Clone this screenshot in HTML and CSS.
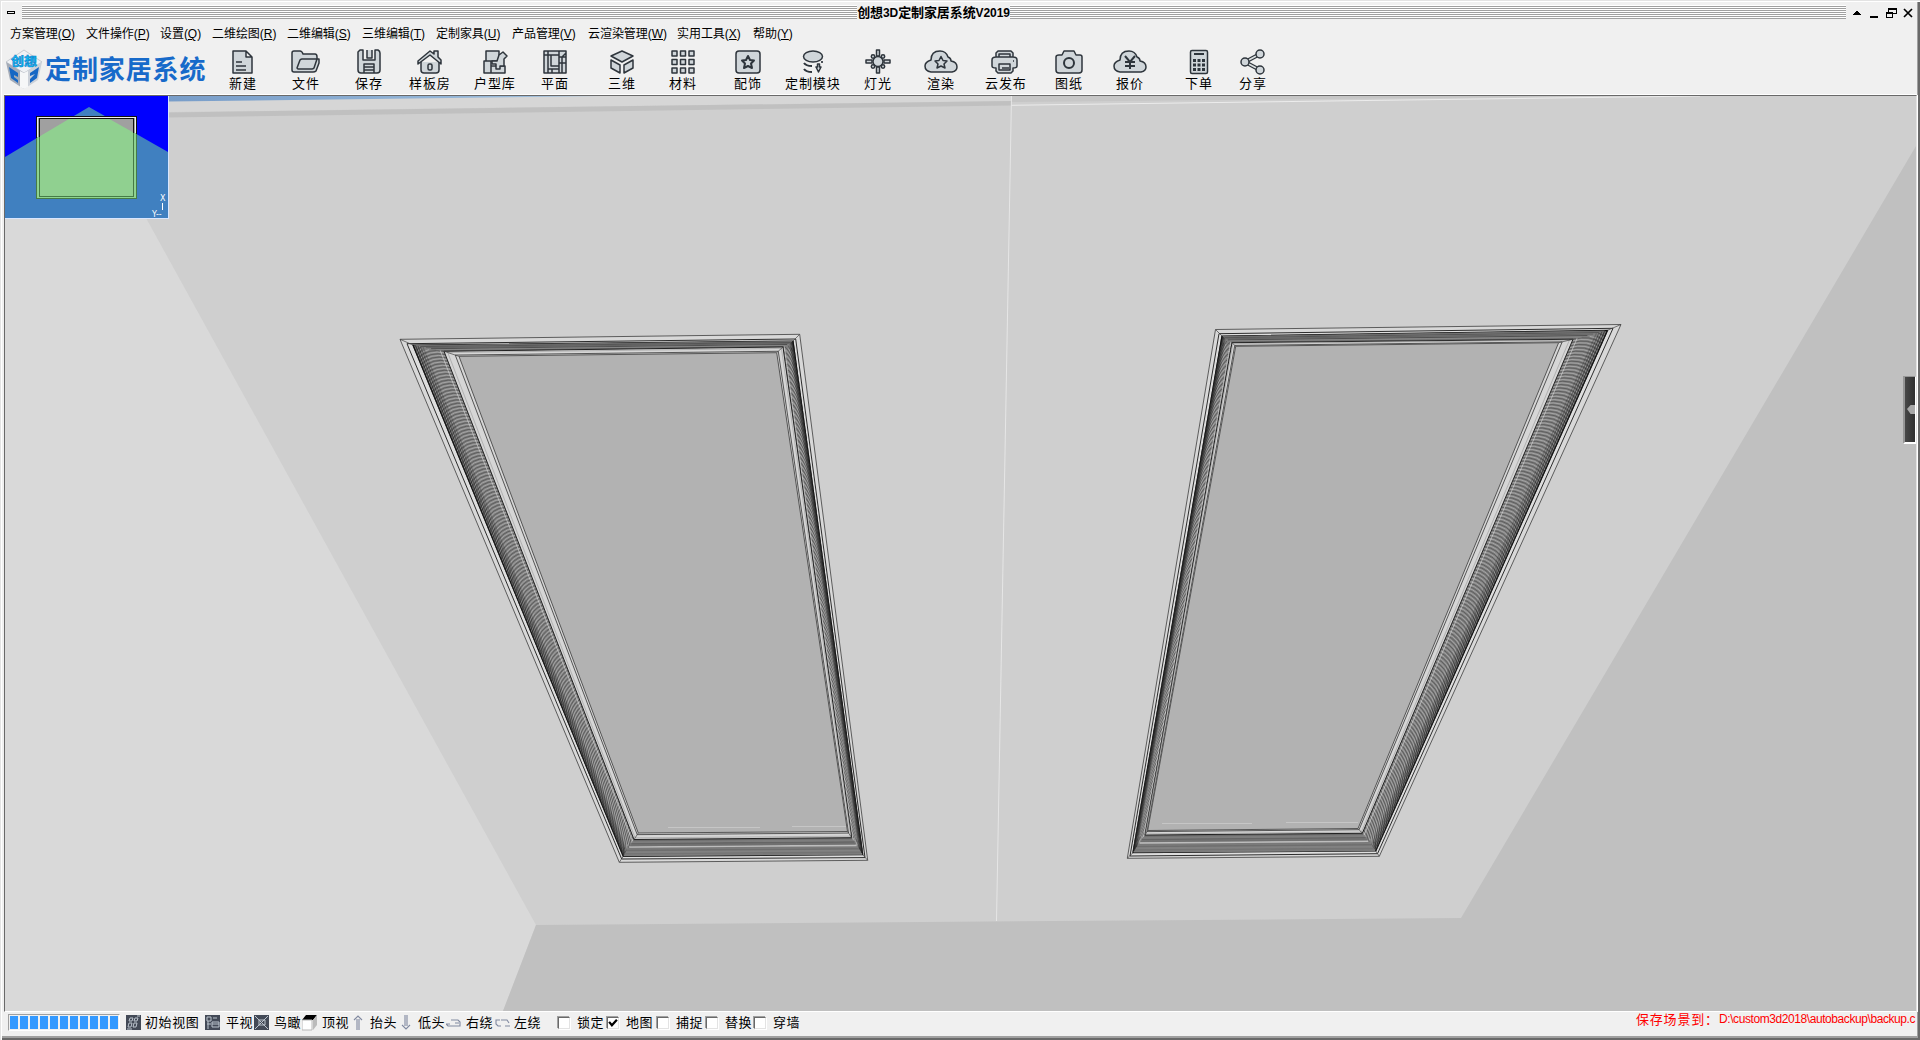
FILE: index.html
```html
<!DOCTYPE html>
<html lang="zh-CN">
<head>
<meta charset="utf-8">
<title>创想3D定制家居系统V2019</title>
<link rel="stylesheet" href="styles.css">
</head>
<body>
<div class="window">
  <header class="titlebar">
    <span class="sysmenu"></span>
    <span class="stripes left"></span>
    <h1>创想<span>3D</span>定制家居系统<span>V2019</span></h1>
    <span class="stripes right"></span>
    <svg class="winbtns" width="72" height="20" viewBox="0 0 72 20" shape-rendering="crispEdges">
      <path d="M7 15h8v-1h-1v-1h-1v-1h-1v-1h-2v1h-1v1H8v1H7z"/>
      <path d="M24 16h8v2h-8z"/>
      <path d="M42 8h8v5h-3M42 8v4M42 9h8" fill="none" stroke="#000" />
      <path d="M40 12h6v5h-6zM40 13h6" fill="none" stroke="#000"/>
      <path d="M58 9l8 8M66 9l-8 8" stroke="#000" stroke-width="1.7" shape-rendering="auto"/>
    </svg>
  </header>
  <nav class="menu">
    <span>方案管理(<u>O</u>)</span><span>文件操作(<u>P</u>)</span><span>设置(<u>Q</u>)</span><span>二维绘图(<u>R</u>)</span><span>二维编辑(<u>S</u>)</span><span>三维编辑(<u>T</u>)</span><span>定制家具(<u>U</u>)</span><span>产品管理(<u>V</u>)</span><span>云渲染管理(<u>W</u>)</span><span>实用工具(<u>X</u>)</span><span>帮助(<u>Y</u>)</span>
  </nav>
  <div class="tools">
    <div class="brand">
      <svg width="38" height="42" viewBox="0 0 38 42">
        <path d="M19 1L37 13 19 24 1 13z" fill="#f0f2f5" stroke="#b5bac2" stroke-width=".7"/>
        <path d="M1 13l18 11v16L5 31z" fill="#a4abb7"/><path d="M37 13L19 24v16l14-9z" fill="#ccd1d9"/>
        <path d="M15 22l4 2 4-2v16l-4 2-4-2z" fill="#f6f7f8"/>
        <path d="M4 18l9 6v4l-4-2v2l4 3v3l-7-5z" fill="#1767c4"/><path d="M34 18l-9 6v3l5-2-5 5v4l7-5z" fill="#1767c4"/>
        <text x="19" y="17" text-anchor="middle" textLength="26" lengthAdjust="spacingAndGlyphs" class="cube-text">创想</text>
      </svg>
      <b>定制家居系统</b>
    </div>
    <div class="toolbar">
      <button><svg viewBox="0 0 34 26"><path class="f" d="M7 2h13l6 6v16H7zM20 2v6h6M10 13h6M10 17h10M10 21h10"/></svg>新建</button>
      <button><svg viewBox="0 0 34 26"><path class="f" d="M5 23Q3 23 3 21V4Q3 2 5 2h6q2 0 3 3h12q2 0 2 3v2h2v4l-3 8q-1 1-3 1zM8 19l3-8q1-1 2-1h15l-3 9q-1 1-2 1H9z"/></svg>文件</button>
      <button><svg viewBox="0 0 34 26"><path class="f" d="M8 1h3v10h12V1h3q2 1 2 3v17q0 3-3 3H9q-3 0-3-3V3zM15 1v8h5V1M12 24v-9h10v9M12 18h10M12 21h10"/></svg>保存</button>
      <button><svg viewBox="0 0 34 26"><path class="f" d="M8 13v8q0 3 3 3h12q3 0 3-3v-8"/><path class="f" d="M5 15v-3L17 2l4 3V2h4v6l3 3v4L17 6z"/><rect class="f" x="15" y="15" width="4" height="6" rx="1.500"/></svg>样板房</button>
      <button><svg viewBox="0 0 34 26"><path class="f" d="M6 12h7v12H6zM13 17h14v7H13zM8 2h13v10H8z"/><path class="f" d="M21 6l4-3 4 4-3 3v7h-4v3h-4v-5h-4v-3h5z"/></svg>户型库</button>
      <button><svg viewBox="0 0 34 26"><path class="f" d="M6 2h22v22H6zM10 2v22M6 6h15M13 6h8v11h-8zM21 2v22M24 24V8l4-4M10 20h11M14 20v4M21 8h7M21 14h7"/></svg>平面</button>
      <button><svg viewBox="0 0 34 26"><path class="f" d="M17 2l11 5-11 6L6 7zM6 11l9 5v8l-9-5zM28 11l-9 5v8l9-5z"/></svg>三维</button>
      <button><svg viewBox="0 0 34 26"><path class="f" d="M6 2h5v5H6zM14.500 2h5v5h-5zM23 2h5v5h-5zM6 10.500h5v5H6zM14.500 10.500h5v5h-5zM23 10.500h5v5h-5zM6 19h5v5H6zM14.500 19h5v5h-5zM23 19h5v5h-5z"/></svg>材料</button>
      <button><svg viewBox="0 0 34 26"><rect class="f" x="5" y="2" width="24" height="22" rx="3"/><path class="f k" d="M17 7l2 4 4 .500-3 3 1 4.500-4-2-4 2 1-4.500-3-3 4-.500z"/></svg>配饰</button>
      <button><svg viewBox="0 0 34 26"><ellipse class="f" cx="17" cy="7.500" rx="9.500" ry="5.500"/><path class="n k" d="M8 14q2 3 8 3M8 20q2 3 8 3"/><path class="f" d="M20 18h1.500v-3h2v3H25l-2.500 5z"/><path class="n" d="M26 12v2"/></svg>定制模块</button>
      <button><svg viewBox="0 0 34 26"><path class="f" d="M15.500 1h3v6h-3zM15.500 18h3v6h-3zM5 11h6v3H5zM23 11h6v3h-6z"/><circle class="f" cx="17" cy="12.500" r="5"/><g class="f"><circle cx="12" cy="7.500" r="1.700"/><circle cx="22" cy="7.500" r="1.700"/><circle cx="12" cy="17.500" r="1.700"/><circle cx="22" cy="17.500" r="1.700"/></g></svg>灯光</button>
      <button><svg viewBox="0 0 34 26"><path class="f" d="M7 23Q1 22 1 17q0-4 6-6 0-9 9-9 6 0 8 6 3 1 3 4 6 1 6 6 0 4-5 5z"/><path class="f" d="M17 7.500l2 4 4 .500-3 3 1 4-4-2-4 2 1-4-3-3 4-.500z"/></svg>渲染</button>
      <button><svg viewBox="0 0 34 26"><path class="f" d="M7 8V4l2-2h13l2 2v4q4 0 4 3v6q0 2-4 2v3l-2 2H9l-2-2v-3q-4 0-4-2v-6q0-3 4-3zM7 8h17M10 5h11v3H10zM10 15h11v6H10zM13 19h7M24 12h1"/></svg>云发布</button>
      <button><svg viewBox="0 0 34 26"><path class="f" d="M4 8q0-2 3-2h3l2-4h10l2 4h4q2 0 2 2v13q0 3-3 3H7q-3 0-3-3z"/><circle class="f k" cx="17" cy="14" r="5"/></svg>图纸</button>
      <button><svg viewBox="0 0 34 26"><path class="f" d="M7 23Q1 22 1 17q0-4 6-6 0-9 9-9 6 0 8 6 3 1 3 4 6 1 6 6 0 4-5 5z"/><path class="n k" d="M12 7l5 6 5-6M12 13h10M12 17h10M17 13v7"/></svg>报价</button>
      <button><svg viewBox="0 0 34 26"><rect class="f" x="8.500" y="1.500" width="17" height="23" rx="1.500"/><path class="n k" d="M12 5h10"/><path class="n keys" d="M11 11.500h12M11 16h12M11 20.500h12"/></svg>下单</button>
      <button><svg viewBox="0 0 34 26"><path class="n thick" d="M9 13L24 5M9 13l15 8"/><path class="thin" d="M9 13L24 5M9 13l15 8"/><circle class="f" cx="9" cy="13" r="4"/><circle class="f" cx="24" cy="5" r="4"/><circle class="f" cx="24" cy="21" r="4"/></svg>分享</button>
    </div>
  </div>
  <main class="viewport">
    <svg class="scene" width="1911" height="915" viewBox="5 96 1911 915">
      <defs>
        <linearGradient id="sky"><stop offset="0" stop-color="#789dc9"/><stop offset="1" stop-color="#a3c3df"/></linearGradient>
      </defs>
      <rect x="5" y="96" width="1911" height="915" fill="#cfcfcf"/>
      <path d="M168 96H1011V101L168 112z" fill="#d6d6d6"/>
      <path d="M168 96H600L168 101.500z" fill="url(#sky)"/>
      <path d="M168 112.500L1011 101V105.500L168 117.500z" fill="#c0c0c0"/>
      <path d="M1011 96H1640L1011 102z" fill="#c6c6c6"/>
      <path d="M1011 105.300L1700 96" stroke="#ececec" fill="none"/>
      <path d="M5 218H146L536 925 503 1011H5z" fill="#d9d9d9"/>
      <path d="M536 925L1461 918 1916 146V1011H503z" fill="#c0c0c0"/>
      <path d="M1011.500 96L996.500 921" stroke="#e6e6e6" fill="none"/>
      <g id="frames"></g>
      <path d="M668 827.500h92M792 826.500h54M1162 823.500h90M1286 822.500h72" stroke="#c6c6c6" fill="none" shape-rendering="crispEdges"/>
    </svg>
    <svg class="minimap" width="164" height="123" viewBox="0 0 164 123">
      <rect width="163" height="122" fill="#00f"/>
      <path d="M0 61L84 11 163 56V122H0z" fill="#4080c0"/>
      <rect x="31" y="20" width="101" height="83" fill="#a0a0a0"/>
      <path d="M31 42.500L69 20h30l33 18.400V103H31z" fill="#90d090"/>
      <g fill="none" shape-rendering="crispEdges">
        <path d="M32.500 41V22M130.500 37V22M32 21.500h99" stroke="#eee"/>
        <path d="M33 41V102M130.500 37V102M32 101.500h99" stroke="#8ed68e"/>
        <path d="M31.500 42V20.500h100V38M34.500 41V22.500h94V37" stroke="#111"/>
        <path d="M31.500 42V102.500h100V38M34.500 41V100.500h94V37" stroke="#467b46"/>
        <path d="M163.500 0V122.500H0" stroke="#d8e6ff"/>
      </g>
      <text x="155" y="105" class="axis">X</text><path d="M157.500 107v7" stroke="#fff"/><text x="147" y="121" class="axis">Y--</text>
    </svg>
    <div class="drawer"><i></i></div>
  </main>
  <footer class="status">
    <div class="progress"><i></i><i></i><i></i><i></i><i></i><i></i><i></i><i></i><i></i><i></i><i></i></div>
    <div class="views">
      <svg viewBox="0 0 16 16"><path class="bg" d="M0 0h15v15H0z"/><path class="w" d="M4 3h3L6 6H3zM9 3h3l-1 3H8zM3 8h3l-1 4H2zM8 8h3l-1 4H7zM11 1h3M1 14h5"/></svg><span>初始视图</span>
      <svg viewBox="0 0 16 16"><path class="bg" d="M0 0h15v15H0z"/><path class="w" d="M2 2h4v4H2zM3 6v8M2 9h4M7 7h7v5H7zM8 3h4M7 9h7"/></svg><span>平视</span>
      <svg viewBox="0 0 16 16"><path class="bg" d="M0 0h15v15H0z"/><path class="w" d="M1 1l13 13M14 1L1 14M5 5h6v5H5z"/></svg><span>鸟瞰</span>
      <svg viewBox="0 0 16 16"><path d="M4 0h11l-4 5H0z"/><path d="M0 5h10v10H0z" fill="#fff" stroke="#b8b8b8"/><path d="M11 5l4-5v10l-4 5z" fill="#bbb"/></svg><span>顶视</span>
      <svg viewBox="0 0 16 16"><path class="arrow" d="M4 15V4M6 15V4M1 5l4-4 4 4"/></svg><span>抬头</span>
      <svg viewBox="0 0 16 16"><path class="arrow" d="M4 0v11M6 0v11M1 10l4 4 4-4"/></svg><span>低头</span>
      <svg viewBox="0 0 16 16"><path class="arrow" d="M4 9H0l2 2h12V7l-2-2H5M9 8h4"/></svg><span>右绕</span>
      <svg viewBox="0 0 16 16"><path class="arrow" d="M5 5H1v4l2 2h3M6 5h6l2 3M10 11h5"/></svg><span>左绕</span>
      <i class="check"></i><span>锁定</span>
      <i class="check"><svg viewBox="0 0 9 9"><path d="M1 3.500l2.500 3L8 1.500" fill="none" stroke="#000" stroke-width="2"/></svg></i><span>地图</span>
      <i class="check"></i><span>捕捉</span>
      <i class="check"></i><span>替换</span>
      <i class="check"></i><span>穿墙</span>
    </div>
    <p class="message"><span>保存场景到：</span>D:\custom3d2018\autobackup\backup.c</p>
  </footer>
</div>
<script src="scene.js"></script>
</body>
</html>
```
FILE: styles.css
```css
* { box-sizing: border-box; }
body { margin: 0; overflow: hidden; background: #f0f0f0; color: #000; font-family: "Liberation Sans", "Noto Sans CJK SC", sans-serif; font-size: 12px; }
.window { width: 1920px; height: 1040px; display: flex; flex-direction: column; padding: 1px 2px 0 1px; border-top: 1px solid #e3e3e3; border-left: 1px solid #e3e3e3; box-shadow: inset 1px 1px #fff, inset -2px -2px #696969, inset -3px -4px #a0a0a0; }
.titlebar { height: 20px; flex: none; display: flex; padding: 4px 0 0 5px; }
.sysmenu { flex: none; width: 8px; height: 3px; border: 1px solid #000; margin: 5px 7px 0 0; }
.stripes { flex: none; height: 14px; margin-top: -1px; background: repeating-linear-gradient(#fff 0 1px, #a0a0a0 1px 2px); }
.stripes.left { width: 835px; }
.stripes.right { width: 836px; }
h1 { flex: none; width: 153px; margin: 0; display: flex; justify-content: center; font: bold 13px/14px "Liberation Sans", "Noto Sans CJK SC", sans-serif; letter-spacing: -.1px; white-space: nowrap; }
h1 span { font-size: 12px; }
.winbtns { flex: none; margin: -6px 0 0; }
.menu { height: 26px; flex: none; padding-left: 8px; display: grid; grid-template-columns: 76px 74px 52px 75px 75px 74px 76px 76px 89px 76px 60px; line-height: 24px; letter-spacing: -.05px; white-space: nowrap; }
.menu u { text-underline-offset: 1px; }
.tools { height: 47px; flex: none; display: flex; }
.brand { width: 227px; padding-left: 3px; flex: none; display: flex; align-items: flex-start; }
.brand svg { flex: none; margin-top: 1px; }
.brand b { color: #176aca; font: bold 26px/38px "Noto Sans CJK SC", sans-serif; letter-spacing: .9px; margin-left: 2px; margin-top: 1px; white-space: nowrap; }
.cube-text { font: bold 12px "Noto Sans CJK SC", sans-serif; fill: #0cbdf5; stroke: #0879c8; stroke-width: .5px; }
.toolbar { display: grid; justify-items: start; grid-template-columns: 63px 63px 54px 65px 67px 67px 61px 65px 51px 79px 63px 58px 70px 61px 69px 54px 60px; }
.toolbar button { border: 0; background: none; padding: 1px 0 0; display: flex; flex-direction: column; align-items: center; font: 13px/16px "Noto Sans CJK SC", sans-serif; letter-spacing: .9px; color: #000; white-space: nowrap; }
.toolbar svg { width: 34px; height: 26px; margin: 0 -4px; }
.f { fill: #d0d6da; stroke: #2e353c; stroke-width: 1.5; stroke-linejoin: round; }
.n { fill: none; stroke: #2e353c; stroke-width: 1.7; }
.k { stroke-width: 2; }
.keys { stroke-width: 3; stroke-dasharray: 3 1.5; }
.thick { stroke-width: 4; }
.thin { stroke: #dce0e2; stroke-width: 1.5; }
.viewport { position: relative; flex: none; width: 1913px; height: 917px; margin-left: 2px; border-top: 1px solid #696969; border-left: 1px solid #696969; border-right: 1px solid #e3e3e3; border-bottom: 1px solid #fff; box-shadow: 0 -1px #fff, 1px 0 #fff; }
.scene { display: block; }
.minimap { position: absolute; left: 0; top: 0; }
.axis { fill: #fff; font: 8px "DejaVu Sans", sans-serif; }
.drawer { position: absolute; right: 0; top: 280px; width: 13px; height: 68px; background: linear-gradient(90deg, #484848, #303030); border: 1px solid #969696; border-left-width: 2px; border-right-color: #fff; border-bottom: 2px solid #fff; display: flex; align-items: center; justify-content: flex-end; }
.drawer i { width: 8px; height: 9px; background: #a8a8a8; clip-path: polygon(0 45%, 45% 0, 100% 0, 100% 100%, 45% 100%); }
.status { height: 22px; flex: none; width: 1911px; margin-left: 3px; display: flex; padding: 2px 0 0 3px; overflow: hidden; }
.progress { flex: none; width: 112px; height: 17px; border: 1px solid #a0a0a0; border-right-color: #fff; border-bottom-color: #fff; display: flex; gap: 2px; padding: 1px; margin-right: 6px; }
.progress i { width: 8px; height: 13px; background: #39f; flex: none; }
.views { flex: none; width: 1510px; display: grid; grid-template-columns: 19px 60px 21px 28px 20px 28px 20px 31px 17px 31px 17px 28px 20px 29px 19px 44px 19px 30px 19px 31px 19px 30px 19px 29px 19px 40px; align-items: start; font: 13px/16px "Noto Sans CJK SC", sans-serif; letter-spacing: .6px; white-space: nowrap; }
.views > svg { width: 16px; height: 16px; margin-top: 1px; }
.bg { fill: #434a57; }
.w { fill: none; stroke: #bcc4ce; }
.arrow { fill: none; stroke: #8089a0; stroke-width: 1.1; }
.check { width: 12px; height: 12px; margin-top: 3px; background: #fff; border: 1px solid; border-color: #696969 #e3e3e3 #e3e3e3 #696969; box-shadow: -1px -1px #a0a0a0, 1px 1px #fff; display: flex; }
.message { margin: -3px 0 0; color: red; font-size: 12px; line-height: 16px; letter-spacing: -.42px; white-space: nowrap; display: flex; }
.message span { font: 13px/15px "Noto Sans CJK SC", sans-serif; letter-spacing: .8px; flex: none; width: 83px; }
```
FILE: scene.js
```js
// Ceiling mouldings: each ring is top-left, top-right, bottom-right, bottom-left.
const frames = [
  {
    outer: [[400, 339.300], [799.700, 334.300], [867.700, 860.300], [619.300, 862.300]],
    lip: [[407, 343.700], [795.700, 339], [865, 857.600], [621.700, 859]],
    edge: [[413, 345], [793, 341], [862.700, 854.700], [623.300, 856.300]],
    cove: [[444, 351.300], [783, 347], [851.700, 837.700], [634, 839.500]],
    pane: [[459, 356.300], [776.700, 352.700], [847.500, 831.500], [638.300, 833]]
  },
  {
    outer: [[1215.500, 329.500], [1621, 324.500], [1379.300, 856.300], [1127.300, 858.300]],
    lip: [[1219, 333.700], [1613, 328.300], [1377.500, 853.700], [1130, 856]],
    edge: [[1222, 336], [1607.500, 330.300], [1375.700, 851], [1133, 852.700]],
    cove: [[1232, 342.700], [1573, 339.300], [1362.300, 833.300], [1145, 835]],
    pane: [[1235.700, 346.300], [1558.600, 342.700], [1358, 828.500], [1147.700, 830.500]]
  }
];
const layer = document.getElementById("frames");
function add(tag, attrs) {
  const el = document.createElementNS("http://www.w3.org/2000/svg", tag);
  for (const k in attrs) el.setAttribute(k, attrs[k]);
  layer.append(el);
}
function ring(points, fill, stroke, width = 1) {
  add("polygon", { points: points.map(q => q.join()).join(" "), fill, stroke, "stroke-width": width });
}
const lerp = (p, q, t) => [p[0] + (q[0] - p[0]) * t, p[1] + (q[1] - p[1]) * t];
const mix = (a, b, t) => a.map((p, i) => lerp(p, b[i], t));
function line(points, stroke, width) {
  add("polyline", { points: points.map(q => q.join()).join(" "), fill: "none", stroke, "stroke-width": width });
}
// A long side: fine ribs run diagonally from the outer edge to the cove.
function ribs(f, a, b, reach, steps) {
  for (let i = -40; i < steps; i++) {
    const pts = [];
    for (let k = 0; k <= 4; k++) {
      const across = k / 4;
      const along = i / steps + reach * (1 - across) * (1 - across);
      if (along < 0 || along > 1) continue;
      pts.push(lerp(lerp(f.edge[a], f.edge[b], along), lerp(f.cove[a], f.cove[b], along), across));
    }
    if (pts.length > 1) line(pts, i % 2 ? "rgba(215,215,215,.6)" : "rgba(45,45,45,.6)", 0.7);
  }
  for (let t = 0; t < 0.4; t += 0.08) {
    const m = mix(f.edge, f.cove, t);
    line([m[a], m[b]], `rgba(20,20,20,${0.75 - t * 1.6})`, 1.2);
  }
  const shine = mix(f.edge, f.cove, 0.88);
  line([shine[a], shine[b]], "rgba(220,220,220,.7)", 0.9);
}
// A short side: long shallow grain lines.
function grain(f, a, b, tones) {
  tones.forEach((tone, i) => {
    const m = mix(f.edge, f.cove, (i + 0.5) / tones.length);
    line([m[a], m[b]], tone, a === 0 ? 1 : 1.6);
  });
}
frames.forEach((f, n) => {
  ring(f.outer, "#d8d8d8", "#5c5c5c");
  ring(f.lip, "#dedede", "#2c2c2c");
  ring(f.edge, "#808080", "#111", 1.2);
  ribs(f, 0, 3, n ? 0.06 : 0.025, n ? 170 : 300);
  ribs(f, 1, 2, n ? 0.025 : 0.06, n ? 300 : 170);
  grain(f, 0, 1, ["#707070", "#555", "#626262", "#505050", "#858585", "#626262"]);
  grain(f, 3, 2, ["#7b7b7b", "#747474", "#818181", "#6e6e6e", "#797979", "#bdbdbd", "#707070", "#656565", "#7d7d7d", "#6b6b6b"]);
  ring(f.cove, "#d6d6d6", "#222");
  ring(mix(f.cove, f.pane, 0.25), "none", "#999", 0.6);
  ring(mix(f.cove, f.pane, 0.75), "none", "#333", 0.8);
  ring(f.pane, "#b2b2b2", "#555");
  f.outer.forEach((p, i) => {
    line([p, f.edge[i]], "#444", 0.7);
    line([f.cove[i], f.pane[i]], "#444", 0.7);
  });
});
```
